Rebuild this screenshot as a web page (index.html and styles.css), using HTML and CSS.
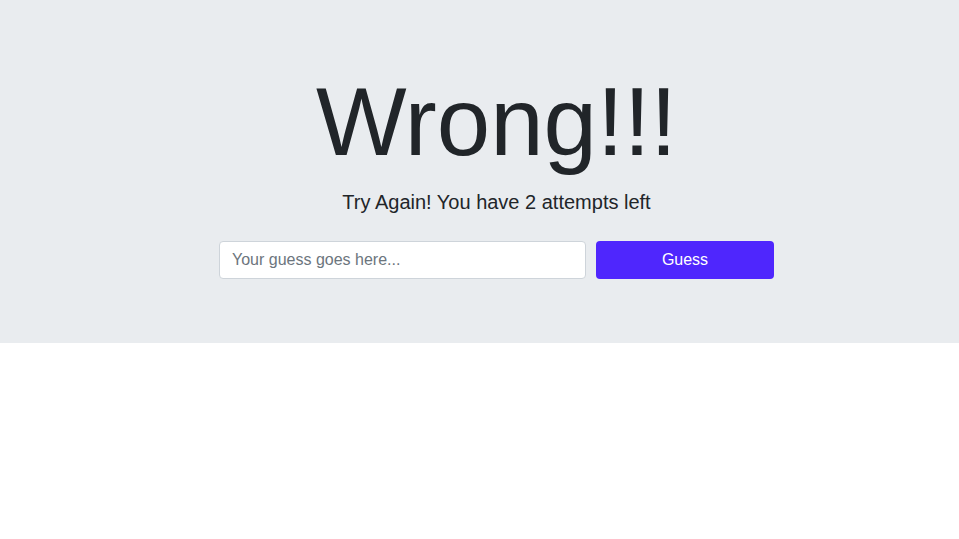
FILE: index.html
```html
<!DOCTYPE html>
<html lang="en">
<head>
<meta charset="utf-8">
<title>Guess</title>
<link rel="stylesheet" href="styles.css">
</head>
<body>
<section class="jumbotron">
  <div class="inner">
    <h1 class="display">Wrong!!!</h1>
    <p class="lead">Try Again! You have 2 attempts left</p>
    <form class="guess-form">
      <input class="guess-input" type="text" placeholder="Your guess goes here...">
      <button class="guess-btn" type="button">Guess</button>
    </form>
  </div>
</section>
</body>
</html>
```
FILE: styles.css
```css
html, body {
  margin: 0;
  padding: 0;
  background: #fff;
  font-family: "Liberation Sans", Arial, sans-serif;
  color: #212529;
}
.jumbotron {
  background: #e9ecef;
  padding: 64px 0 64px 34px;
  display: flex;
  justify-content: center;
}
.inner {
  width: 555px;
  text-align: center;
}
.display {
  margin: 0 0 8px;
  font-size: 96px;
  font-weight: 400;
  line-height: 1.2;
}
.lead {
  margin: 0 0 24px;
  font-size: 20px;
  line-height: 30px;
}
.guess-form {
  display: flex;
  gap: 10px;
  margin: 0;
}
.guess-input {
  box-sizing: border-box;
  width: 367px;
  height: 38px;
  padding: 6px 12px;
  border: 1px solid #ced4da;
  border-radius: 4px;
  background: #fff;
  font-family: inherit;
  font-size: 16px;
  color: #495057;
  outline: none;
}
.guess-input::placeholder {
  color: #6c757d;
  opacity: 1;
}
.guess-btn {
  box-sizing: border-box;
  width: 178px;
  height: 38px;
  border: none;
  border-radius: 4px;
  background: #4f26fd;
  color: #fff;
  font-family: inherit;
  font-size: 16px;
  cursor: pointer;
}
```
